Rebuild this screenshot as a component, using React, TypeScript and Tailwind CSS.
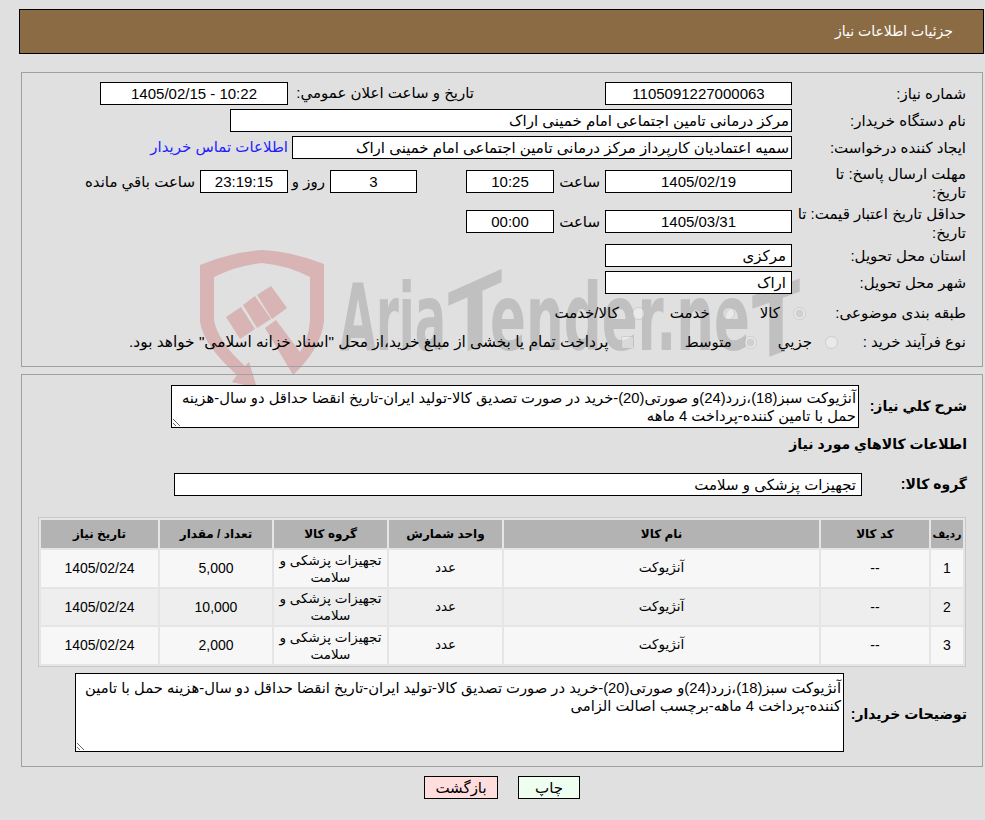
const goods = [
  { id: 1, qty: '5,000', bg: 'bg-[#f7f7f7]', h: 'h-[37px]' },
  { id: 2, qty: '10,000', bg: 'bg-[#eeeeee]', h: 'h-[36px]' },
  { id: 3, qty: '2,000', bg: 'bg-[#f7f7f7]', h: 'h-[37px]' },
]

const desc =
  'آنژیوکت سبز(18)،زرد(24)و صورتی(20)-خرید در صورت تصدیق کالا-تولید ایران-تاریخ انقضا حداقل دو سال-هزینه حمل با تامین کننده-پرداخت 4 ماهه'

function Box({ className = '', children }: { className?: string; children?: React.ReactNode }) {
  return (
    <div className={`h-[23px] shrink-0 border border-black bg-white leading-[21px] whitespace-nowrap overflow-hidden ${className}`}>
      {children}
    </div>
  )
}

function Label({ children }: { children: React.ReactNode }) {
  return <div className="w-[190px] shrink-0 pr-[16px] leading-[19px]">{children}</div>
}

function Watermark() {
  return (
    <svg className="absolute left-0 top-0 [direction:ltr]" width="985" height="820" viewBox="0 0 985 820">
      <g fill="#d8b4b4">
        <path d="M200 265 Q232 252 262 250 Q294 252 324 264 L324 322 Q320 350 293 375 L265 328 L276 320 L300 352 Q309 338 310 320 L310 277 Q286 265 262 263 Q238 265 214 277 L214 320 Q218 342 245 366 L249 362 L257 388 L232 382 L237 375 Q204 346 200 322 Z" />
        <path d="M226 317 L241 307 L255 329 L240 339 Z" />
        <path d="M243 305 L255 296 L271 319 L257 328 Z" />
        <path d="M257 295 L271 286 L287 308 L272 319 Z" />
      </g>
      {/* logo wordmark: the two T's have a slanted bar */}
      <g fill="#c0c0c0" fontFamily="DejaVu Sans, sans-serif" fontWeight="700" fontSize="92">
        <text x="340" y="350" textLength="106" lengthAdjust="spacingAndGlyphs">Aria</text>
        <text x="0" y="0" textLength="54" lengthAdjust="spacingAndGlyphs" transform="translate(448 360) skewY(-24)">T</text>
        <text x="490" y="350" textLength="260" lengthAdjust="spacingAndGlyphs">ender.ne</text>
        <text x="0" y="0" textLength="48" lengthAdjust="spacingAndGlyphs" transform="translate(752 363) skewY(-20)">T</text>
      </g>
    </svg>
  )
}

export default function App() {
  return (
    <div dir="rtl" className="relative h-[820px] w-[985px] overflow-hidden bg-[#e0e0e0] pt-[9px] font-['Liberation_Sans','DejaVu_Sans',sans-serif] text-[15px] text-black">
      <Watermark />

      <div className="relative">
        <div className="ml-[19px] mr-px h-[45px] border border-black bg-[#8b6b43] pr-[30px] text-[14px] leading-[43px] text-white">
          جزئیات اطلاعات نیاز
        </div>

        {/* Main form */}
        <div className="ml-[21px] mr-[2px] mt-[18px] h-[295px] border border-[#a0a0a0] pt-[9px]">
          <div className="flex items-center">
            <Label>شماره نیاز:</Label>
            <Box className="w-[187px] text-center">1105091227000063</Box>
            <div className="mr-[131px] w-[181px] shrink-0 whitespace-nowrap">تاریخ و ساعت اعلان عمومي:</div>
            <Box className="mr-[5px] w-[188px] text-center">10:22 - 1405/02/15</Box>
          </div>
          <div className="mt-[4px] flex items-center">
            <Label>نام دستگاه خریدار:</Label>
            <Box className="w-[562px] pr-[2px]">مرکز درمانی تامین اجتماعی امام خمینی اراک</Box>
          </div>
          <div className="mt-[4px] flex items-center">
            <Label>ایجاد کننده درخواست:</Label>
            <Box className="w-[500px] pr-[2px]">سمیه اعتمادیان کارپرداز مرکز درمانی تامین اجتماعی امام خمینی اراک</Box>
            <a className="mr-[4px] whitespace-nowrap text-[#1f1fff]">اطلاعات تماس خریدار</a>
          </div>

          <div className="mt-[5px] flex items-start">
            <Label>
              مهلت ارسال پاسخ: تا
              <br />
              تاریخ:
            </Label>
            <Box className="mt-[6px] w-[187px] text-center">1405/02/19</Box>
            <div className="mt-[6px] w-[51px] shrink-0 pr-[5px] leading-[23px]">ساعت</div>
            <Box className="mt-[6px] w-[88px] text-center">10:25</Box>
            <Box className="mr-[49px] mt-[6px] w-[87px] text-center">3</Box>
            <div className="mt-[6px] w-[42px] shrink-0 whitespace-nowrap pr-[5px] leading-[23px]">روز و</div>
            <Box className="mt-[6px] w-[88px] bg-[#ffffef] text-center">23:19:15</Box>
            <div className="mr-[5px] mt-[6px] whitespace-nowrap leading-[23px]">ساعت باقي مانده</div>
          </div>
          <div className="mt-[2px] flex items-start">
            <Label>
              حداقل تاریخ اعتبار قیمت: تا
              <br />
              تاریخ:
            </Label>
            <Box className="mt-[6px] w-[187px] text-center">1405/03/31</Box>
            <div className="mt-[6px] w-[51px] shrink-0 pr-[5px] leading-[23px]">ساعت</div>
            <Box className="mt-[6px] w-[88px] text-center">00:00</Box>
          </div>

          <div className="mt-[2px] flex items-center">
            <Label>استان محل تحویل:</Label>
            <Box className="w-[187px] pr-[5px]">مرکزی</Box>
          </div>
          <div className="mt-[4px] flex items-center">
            <Label>شهر محل تحویل:</Label>
            <Box className="w-[187px] pr-[5px]">اراک</Box>
          </div>

          <div className="mt-[8px] flex h-[22px] items-center">
            <div className="w-[176px] shrink-0 pr-[16px]">طبقه بندی موضوعی:</div>
            <input type="radio" name="cat" disabled defaultChecked className="h-[13px] w-[13px] opacity-70" />
            <span className="mr-[13px]">کالا</span>
            <input type="radio" name="cat" disabled className="mr-[25px] h-[13px] w-[13px] opacity-70" />
            <span className="mr-[12px]">خدمت</span>
            <input type="radio" name="cat" disabled className="mr-[25px] h-[13px] w-[13px] opacity-70" />
            <span className="mr-[13px]">کالا/خدمت</span>
          </div>
          <div className="mt-[7px] flex h-[22px] items-center">
            <div className="w-[144px] shrink-0 pr-[16px]">نوع فرآیند خرید :</div>
            <input type="radio" name="proc" disabled className="h-[13px] w-[13px] opacity-70" />
            <span className="mr-[13px]">جزیي</span>
            <input type="radio" name="proc" disabled defaultChecked className="mr-[21px] h-[13px] w-[13px] opacity-70" />
            <span className="mr-[12px]">متوسط</span>
            <input type="checkbox" disabled className="mr-[51px] h-[13px] w-[13px] opacity-70" />
            <span className="mr-[12px] whitespace-nowrap text-[15.4px]">
              پرداخت تمام یا بخشی از مبلغ خرید،از محل "اسناد خزانه اسلامی" خواهد بود.
            </span>
          </div>
        </div>

        {/* Goods */}
        <div className="ml-[21px] mr-[2px] mt-[7px] h-[393px] border border-[#a0a0a0] pt-[10px]">
          <div className="flex items-center">
            <div className="w-[123px] shrink-0 pr-[15px] text-[14px] font-bold">شرح کلي نياز:</div>
            <textarea
              readOnly
              value={desc}
              className="block h-[43px] w-[688px] overflow-hidden border border-black bg-white px-[2px] pt-[3px] text-[14.75px] leading-[18px]"
            />
          </div>
          <div className="mt-[6px] h-[20px] pr-[15px] text-[14px] font-bold leading-[20px]">اطلاعات کالاهاي مورد نياز</div>
          <div className="mt-[19px] flex items-center">
            <div className="w-[120px] shrink-0 pr-[15px] text-[14px] font-bold">گروه کالا:</div>
            <Box className="w-[688px] pr-[5px]">تجهیزات پزشکی و سلامت</Box>
          </div>

          <table className="mr-[16px] mt-[21px] w-[928px] table-fixed border-separate border-spacing-[2px] border border-[#c8c8c8] bg-[#e5e5e5] text-center text-[13.5px]">
            <colgroup>
              <col className="w-[32px]" />
              <col className="w-[108px]" />
              <col className="w-[315px]" />
              <col className="w-[113px]" />
              <col className="w-[113px]" />
              <col className="w-[112px]" />
              <col className="w-[117px]" />
            </colgroup>
            <thead>
              <tr className="h-[28px] bg-[#b3b3b3] text-[12px] font-bold">
                <th className="text-[11px]">رديف</th>
                <th>کد کالا</th>
                <th>نام کالا</th>
                <th>واحد شمارش</th>
                <th>گروه کالا</th>
                <th>تعداد / مقدار</th>
                <th>تاریخ نیاز</th>
              </tr>
            </thead>
            <tbody>
              {goods.map((g) => (
                <tr key={g.id} className={`${g.h} ${g.bg}`}>
                  <td className="text-[14px]">{g.id}</td>
                  <td className="text-[14px]">--</td>
                  <td>آنژیوکت</td>
                  <td>عدد</td>
                  <td className="leading-[17px]">تجهیزات پزشکی و سلامت</td>
                  <td className="text-[14px]">{g.qty}</td>
                  <td className="text-[14px]">1405/02/24</td>
                </tr>
              ))}
            </tbody>
          </table>

          <div className="mt-[6px] flex items-center">
            <div className="w-[138px] shrink-0 pr-[15px] pt-[4px] text-[14px] font-bold">توضیحات خریدار:</div>
            <textarea
              readOnly
              value={desc + '-برچسب اصالت الزامی'}
              className="block h-[79px] w-[769px] overflow-hidden border border-black bg-white px-[2px] pt-[5px] text-[14.75px] leading-[18px]"
            />
          </div>
        </div>

        <div className="mt-[9px] flex justify-center gap-[20px] pl-[19px]">
          <button className="h-[23px] w-[62px] border border-black bg-[#efffef]">چاپ</button>
          <button className="h-[23px] w-[74px] border border-black bg-[#ffdddd]">بازگشت</button>
        </div>
      </div>
    </div>
  )
}
